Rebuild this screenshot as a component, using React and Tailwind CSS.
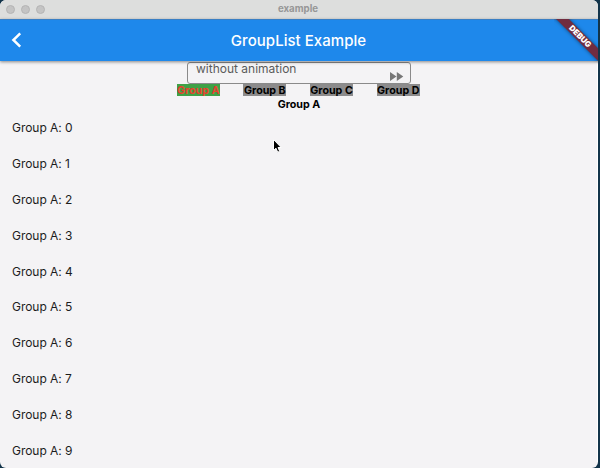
const rows = [0, 1, 2, 3, 4, 5, 6, 7, 8, 9];

function TitleBar() {
  return (
    <div className="relative flex h-[19px] shrink-0 items-center bg-[#dddedd] pl-[6px]">
      <div className="flex gap-[6px]">
        <span className="size-[9px] rounded-full border border-[#b5b5b5] bg-[#c4c4c4]" />
        <span className="size-[9px] rounded-full border border-[#b5b5b5] bg-[#c4c4c4]" />
        <span className="size-[9px] rounded-full border border-[#b5b5b5] bg-[#c4c4c4]" />
      </div>
      <span className="absolute inset-x-0 top-[2px] pr-[2px] text-center text-[9.7px] leading-[13px] font-bold text-[#979797]">
        example
      </span>
    </div>
  );
}

function AppBar() {
  return (
    <header className="relative z-10 flex h-[42px] shrink-0 items-center justify-center border-t border-[#3a7fc4] bg-[#1e88eb] shadow-[0_1px_3px_rgba(0,0,0,0.45)]">
      <svg className="absolute top-[12px] left-[11px]" width="11" height="16" viewBox="0 0 11 16" fill="none">
        <path d="M9.2 1.4 2.4 8l6.8 6.6" stroke="#fff" strokeWidth="2.5" />
      </svg>
      <h1 className="pr-px text-[15px] leading-[20px] font-medium tracking-[0.04px] text-white">GroupList Example</h1>
      <div className="absolute top-[-1px] right-0 h-[44px] w-[44px] overflow-hidden">
        <div className="absolute top-[13px] left-[-15px] flex h-[9px] w-[82px] rotate-45 items-center justify-center bg-[#712c40] text-[8px] leading-[9px] font-black text-white shadow-[0_0_4px_rgba(0,0,0,0.5)]">
          DEBUG
        </div>
      </div>
    </header>
  );
}

function Tab({ label, active }) {
  return (
    <span
      className={
        active
          ? "h-[12px] w-[43px] bg-[#3fa147] text-center text-[#e8402f]"
          : "h-[12px] w-[43px] bg-[#8c8b8c] text-center text-black"
      }
    >
      {label}
    </span>
  );
}

export default function App() {
  return (
    <div className="h-[468px] w-[600px] overflow-hidden bg-[#12344a] pr-[2px] font-['Inter','Liberation_Sans',sans-serif]">
      <div className="relative flex h-[468px] w-[598px] flex-col overflow-hidden rounded-[6px] bg-[#f4f3f5]">
        <TitleBar />
        <AppBar />
        <div className="mx-auto mt-[1px] flex h-[22px] w-[224px] shrink-0 justify-between rounded-[3px] border border-[#8a8a8a] pr-[6px] pl-[8px]">
          <span className="-mt-px text-[12px] leading-[13px] whitespace-nowrap text-[#5b5b5b]">without animation</span>
          <svg className="mt-[8px]" width="15" height="11" viewBox="0 0 15 11" fill="#777">
            <path d="M1 1l6.5 4.5L1 10zM7.8 1l6.5 4.5-6.5 4.5z" />
          </svg>
        </div>
        <nav className="flex h-[13px] shrink-0 justify-center gap-[23.7px] pr-[1.6px] text-[10.7px] leading-[14px] font-bold whitespace-nowrap">
          <Tab label="Group A" active />
          <Tab label="Group B" />
          <Tab label="Group C" />
          <Tab label="Group D" />
        </nav>
        <h2 className="h-[12px] shrink-0 text-center text-[10.7px] leading-[15px] font-bold text-black">Group A</h2>
        <ul className="shrink-0 pt-[1px]">
          {rows.map((n) => (
            <li key={n} className="flex h-[35.9px] items-center pl-[12px] text-[12px] tracking-[-0.04px] text-[#1c1c1c]">
              Group A: {n}
            </li>
          ))}
        </ul>
        <svg className="absolute top-[138px] left-[272px]" width="10" height="16" viewBox="0 0 10 16">
          <path d="M1.5 1.5v11l2.5-2.3 1.7 4 2-.9-1.7-3.8h3.2z" fill="#000" stroke="#fff" strokeWidth="1" />
        </svg>
        <div className="absolute top-[64px] right-0 bottom-[6px] w-px bg-white" />
      </div>
    </div>
  );
}
